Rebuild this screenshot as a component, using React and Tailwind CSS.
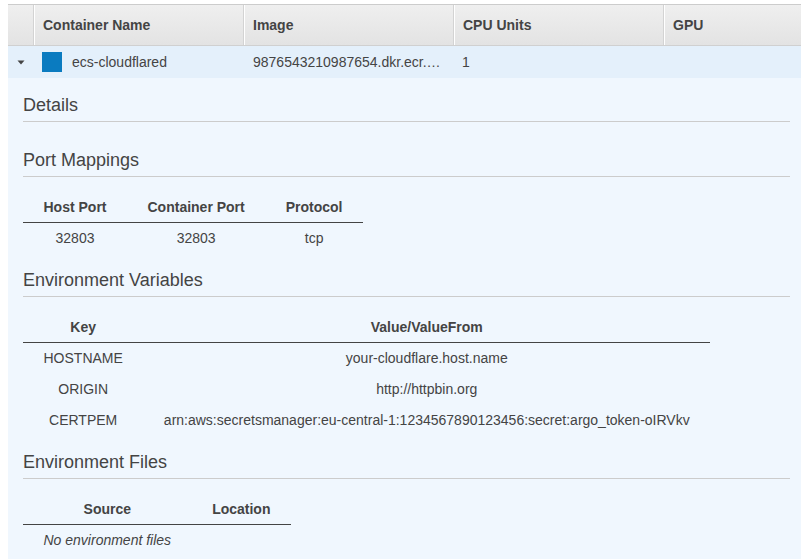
import React from "react";

const portMappings = [{ host: "32803", container: "32803", protocol: "tcp" }];

const envVars = [
  { key: "HOSTNAME", value: "your-cloudflare.host.name" },
  { key: "ORIGIN", value: "http://httpbin.org" },
  {
    key: "CERTPEM",
    value: "arn:aws:secretsmanager:eu-central-1:1234567890123456:secret:argo_token-oIRVkv",
  },
];

function SectionTitle({ children, className = "" }) {
  return (
    <div className={"border-b border-[#cccccc] pb-[5px] text-[18px] leading-[22px] text-[#444]" + " " + className}>
      {children}
    </div>
  );
}

function HeaderCell({ children, className = "" }) {
  return (
    <div
      className={
        "flex items-center border-l border-l-white pl-[8px] font-bold shadow-[-1px_0_0_#d3d3d3] " + className
      }
    >
      {children}
    </div>
  );
}

const th = "px-[20.5px] py-[7px] text-center font-bold leading-[16px] text-[#444] border-b border-[#444]";
const td = "px-[20.5px] py-[7px] text-center leading-[17px] text-[#444]";

export default function App() {
  return (
    <div className="min-h-[559px] bg-white pl-2 pt-1 font-['Liberation_Sans',Arial,sans-serif] text-[14px] text-[#444]">
      {/* grid header */}
      <div className="flex h-[42px] border-t border-b border-t-[#cccccc] border-b-[#d0d0d0] bg-gradient-to-b from-[#efefef] to-[#e3e3e3]">
        <div className="w-[26px] shrink-0" />
        <HeaderCell className="w-[210px] shrink-0">Container Name</HeaderCell>
        <HeaderCell className="w-[210px] shrink-0">Image</HeaderCell>
        <HeaderCell className="w-[210px] shrink-0">CPU Units</HeaderCell>
        <HeaderCell className="flex-1">GPU</HeaderCell>
      </div>

      {/* expanded row */}
      <div className="flex h-[32px] items-center bg-[#e4f0fb]">
        <div className="flex w-[26px] shrink-0 justify-center pr-[1px]">
          <svg width="8" height="5" viewBox="0 0 8 5">
            <path d="M0.5 0.5 H7.5 L4 4.5 Z" fill="#444" />
          </svg>
        </div>
        <div className="flex w-[210px] shrink-0 items-center pl-[8px]">
          <span className="mr-[10px] h-5 w-5 bg-[#0a7bc0]" />
          <span>ecs-cloudflared</span>
        </div>
        <div className="w-[210px] shrink-0 truncate pl-[9px] pr-[9px]">9876543210987654.dkr.ecr.eu-central-1.amazonaws.com</div>
        <div className="w-[210px] shrink-0 pl-[8px]">1</div>
        <div className="flex-1" />
      </div>

      {/* details */}
      <div className="bg-[#f0f7fe] pb-[3px] pl-[15px] pr-[11px] pt-[16px]">
        <SectionTitle>Details</SectionTitle>

        <SectionTitle className="mt-[27px]">Port Mappings</SectionTitle>
        <table className="mt-[15px] border-collapse">
          <thead>
            <tr>
              <th className={th}>Host Port</th>
              <th className={th}>Container Port</th>
              <th className={th}>Protocol</th>
            </tr>
          </thead>
          <tbody>
            {portMappings.map((p) => (
              <tr key={p.host}>
                <td className={td}>{p.host}</td>
                <td className={td}>{p.container}</td>
                <td className={td}>{p.protocol}</td>
              </tr>
            ))}
          </tbody>
        </table>

        <SectionTitle className="mt-[15px]">Environment Variables</SectionTitle>
        <table className="mt-[15px] border-collapse">
          <thead>
            <tr>
              <th className={th}>Key</th>
              <th className={th}>Value/ValueFrom</th>
            </tr>
          </thead>
          <tbody>
            {envVars.map((v) => (
              <tr key={v.key}>
                <td className={td}>{v.key}</td>
                <td className={td}>{v.value}</td>
              </tr>
            ))}
          </tbody>
        </table>

        <SectionTitle className="mt-[15px]">Environment Files</SectionTitle>
        <table className="mt-[15px] border-collapse">
          <thead>
            <tr>
              <th className={th}>Source</th>
              <th className={th}>Location</th>
            </tr>
          </thead>
          <tbody>
            <tr>
              <td className="px-[20.5px] py-[7px] text-left italic leading-[17px] text-[#444]">No environment files</td>
              <td className={td} />
            </tr>
          </tbody>
        </table>
      </div>
    </div>
  );
}
